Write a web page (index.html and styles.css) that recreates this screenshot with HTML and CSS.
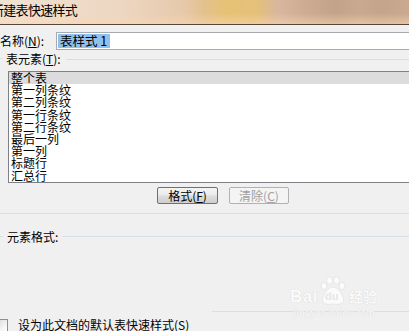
FILE: index.html
```html
<!DOCTYPE html>
<html>
<head>
<meta charset="utf-8">
<link rel="stylesheet" href="styles.css">
</head>
<body>
<div class="window">
  <div class="titlebar"><span class="title">新建表快速样式</span></div>

  <div class="name-row">
    <span class="lbl">名称(<u>N</u>):</span>
    <div class="input"><span class="sel">表样式 1</span></div>
  </div>

  <div class="group">
    <span class="tick"></span>
    <span class="legend">表元素(<u>T</u>):</span>
    <span class="rule"></span>
  </div>

  <ul class="list">
    <li class="selected">整个表</li>
    <li>第一列条纹</li>
    <li>第二列条纹</li>
    <li>第一行条纹</li>
    <li>第二行条纹</li>
    <li>最后一列</li>
    <li>第一列</li>
    <li>标题行</li>
    <li>汇总行</li>
  </ul>

  <div class="buttons">
    <button class="btn">格式(<u>F</u>)</button>
    <button class="btn disabled">清除(<u>C</u>)</button>
  </div>

  <div class="sep"></div>

  <div class="group group2">
    <span class="tick"></span>
    <span class="legend">元素格式:</span>
    <span class="rule"></span>
  </div>

  <div class="sep sep2"></div>

  <div class="check-row">
    <span class="checkbox"></span>
    <span class="check-label">设为此文档的默认表快速样式(<u>S</u>)</span>
  </div>

  <div class="watermark">
    <div class="wm-top">
      <span class="wm-bai">Bai</span>
      <span class="wm-paw">
        <svg width="28" height="30" viewBox="0 0 28 30">
          <g fill="#fbfbfb" stroke="#e2e2e2" stroke-width="0.8">
            <ellipse cx="5" cy="10" rx="3" ry="3.6"/>
            <ellipse cx="10.5" cy="4.5" rx="3" ry="3.8"/>
            <ellipse cx="17.5" cy="4.5" rx="3" ry="3.8"/>
            <ellipse cx="23" cy="10" rx="3" ry="3.6"/>
            <path d="M14 11 C9 11 4 19 3.5 23 C3 28 8 29 14 28 C20 29 25 28 24.5 23 C24 19 19 11 14 11 Z"/>
          </g>
        </svg>
        <span class="wm-du">du</span>
      </span>
      <span class="wm-jy">经验</span>
    </div>
    <div class="wm-url">jingyan.baidu.com</div>
  </div>
</div>
</body>
</html>
```

FILE: styles.css
```css
html, body {
  margin: 0;
  padding: 0;
}

body {
  width: 409px;
  height: 331px;
  overflow: hidden;
  background: #f0f0f0;
  font-family: "Noto Sans CJK SC", "Liberation Sans", sans-serif;
  font-size: 12px;
  color: #000;
}

u {
  text-decoration: underline;
  text-underline-offset: 1px;
}

.window {
  position: relative;
  width: 409px;
  height: 331px;
  display: flex;
  flex-direction: column;
}

.titlebar {
  height: 24px;
  flex: none;
  border-bottom: 1px solid #564638;
  background:
    linear-gradient(to bottom, rgba(255,255,255,0) 55%, rgba(250,214,180,0.55) 100%),
    linear-gradient(to right, #f1e2d3 0%, #ecd6c1 30%, #e6c9ab 45%, #e3c18c 50%, #e6c276 55%, #e4c07a 63%, #d8b79e 68%, #ccab92 75%, #c3a38a 82%, #c9a990 88%, #c4a48b 93%, #caa98f 100%);
  display: flex;
  align-items: center;
  overflow: hidden;
}

.title {
  margin-left: -9px;
  margin-top: -4px;
  font-size: 13px;
  letter-spacing: -0.7px;
  line-height: 14px;
  white-space: nowrap;
}

.name-row {
  margin-top: 7px;
  height: 18px;
  display: flex;
  align-items: center;
}

.lbl {
  width: 56px;
  flex: none;
  line-height: 14px;
  white-space: nowrap;
}

.input {
  flex: 1;
  height: 16px;
  border: 1px solid #a7abb0;
  border-right: none;
  background: #fff;
  padding: 1px 0 0 1px;
  box-sizing: border-box;
  height: 18px;
  display: flex;
  align-items: flex-start;
}

.sel {
  background: #8fc0ee;
  padding: 0 3px 0 2px;
  height: 14px;
  line-height: 14px;
  font-size: 12.5px;
  white-space: nowrap;
}

.group {
  margin-top: 2px;
  height: 13px;
  display: flex;
  align-items: center;
}

.tick {
  width: 3px;
  height: 1px;
  background: #d6dfe6;
  flex: none;
}

.legend {
  margin-left: 3px;
  margin-right: 5px;
  line-height: 13px;
  white-space: nowrap;
}

.rule {
  flex: 1;
  height: 1px;
  background: #d6dfe6;
  margin-top: 1px;
}

.list {
  list-style: none;
  margin: 6px 0 0 8px;
  padding: 0;
  height: 112px;
  border: 1px solid #7d8084;
  border-right: none;
  background: #fff;
  box-sizing: border-box;
  flex: none;
}

.list li {
  height: 12.2px;
  line-height: 12.2px;
  padding-left: 2px;
  white-space: nowrap;
}

.list li.selected {
  background: #dcdcdc;
}

.buttons {
  margin-top: 4px;
  padding-left: 157px;
  display: flex;
  gap: 11px;
  height: 17px;
}

.btn {
  width: 61px;
  height: 17px;
  padding: 0;
  margin: 0;
  border: 1px solid #707070;
  border-radius: 2px;
  background: linear-gradient(to bottom, #f4f4f4 0%, #ebebeb 48%, #dddddd 52%, #cfcfcf 100%);
  font-family: inherit;
  font-size: 12px;
  line-height: 15px;
  color: #000;
  box-sizing: border-box;
}

.btn.disabled {
  width: 60px;
  border-color: #adb2b5;
  background: #f4f4f4;
  color: #a0a0a0;
}

.sep {
  margin-top: 9px;
  height: 1px;
  background: #d6dfe6;
  flex: none;
}

.group2 {
  margin-top: 15px;
  height: 14px;
}

.group2 .legend {
  margin-left: 4px;
  margin-right: 4px;
}

.sep2 {
  margin-top: 68px;
  margin-left: 212px;
}

.check-row {
  margin-top: 6px;
  display: flex;
  align-items: flex-start;
  height: 13px;
}

.checkbox {
  width: 9px;
  height: 12px;
  margin-left: -3px;
  margin-top: 1px;
  border: 1px solid #8e8f8f;
  background: linear-gradient(135deg, #dcdcdc 0%, #f4f4f4 60%, #fff 100%);
  flex: none;
}

.check-label {
  margin-left: 10px;
  line-height: 13px;
  white-space: nowrap;
}

.watermark {
  position: absolute;
  left: 290px;
  top: 276px;
  width: 95px;
  color: #fbfbfb;
  text-shadow: 0 0 1px #c8c8c8;
}

.wm-top {
  display: flex;
  align-items: flex-end;
  height: 30px;
}

.wm-bai {
  font-family: "Liberation Sans", sans-serif;
  font-weight: bold;
  font-size: 17px;
  line-height: 17px;
  letter-spacing: 0.5px;
  margin-bottom: 1px;
}

.wm-paw {
  position: relative;
  width: 28px;
  height: 30px;
  margin-left: 1px;
}

.wm-paw svg {
  display: block;
}

.wm-du {
  position: absolute;
  left: 6px;
  top: 15px;
  font-family: "Liberation Sans", sans-serif;
  font-weight: bold;
  font-size: 11px;
  line-height: 11px;
  color: #e6e6e6;
  text-shadow: none;
}

.wm-jy {
  font-size: 14px;
  line-height: 15px;
  font-weight: bold;
  margin-left: 2px;
  margin-bottom: 2px;
}

.wm-url {
  margin-top: 1px;
  font-family: "Liberation Serif", serif;
  font-size: 11px;
  line-height: 11px;
  padding-left: 3px;
}
```
